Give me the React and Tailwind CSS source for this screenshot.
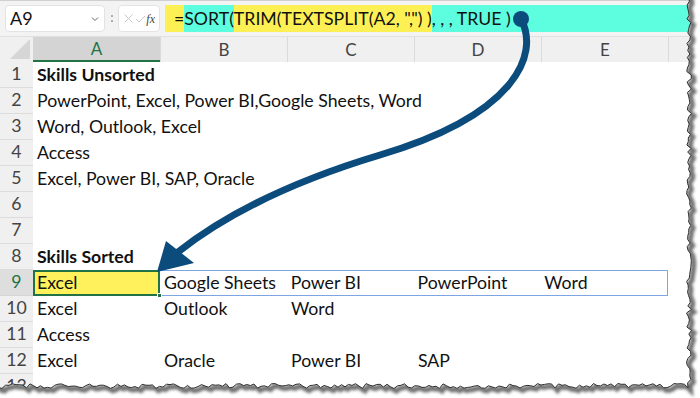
import React from 'react';

const cols = ['A', 'B', 'C', 'D', 'E'];

const rows = [
  { n: 1, cells: ['Skills Unsorted'], bold: true },
  { n: 2, cells: ['PowerPoint, Excel, Power BI,Google Sheets, Word'] },
  { n: 3, cells: ['Word, Outlook, Excel'] },
  { n: 4, cells: ['Access'] },
  { n: 5, cells: ['Excel, Power BI, SAP, Oracle'] },
  { n: 6, cells: [] },
  { n: 7, cells: [] },
  { n: 8, cells: ['Skills Sorted'], bold: true },
  { n: 9, cells: ['Excel', 'Google Sheets', 'Power BI', 'PowerPoint', 'Word'], active: true },
  { n: 10, cells: ['Excel', 'Outlook', 'Word'] },
  { n: 11, cells: ['Access'] },
  { n: 12, cells: ['Excel', 'Oracle', 'Power BI', 'SAP'] },
  { n: 13, cells: [] },
];

// jagged torn edge, seeded so it renders the same each time
function tornPath() {
  let s = 7;
  const rnd = () => {
    s = (s * 9301 + 49297) % 233280;
    return s / 233280;
  };
  const pts = [];
  for (let y = -2; y <= 386; y += 3.5) pts.push([689 + (rnd() - 0.5) * 5, y]);
  for (let x = 688; x >= -2; x -= 3.5) pts.push([x, 386 + (rnd() - 0.5) * 5]);
  return 'M' + pts.map(p => p[0].toFixed(1) + ' ' + p[1].toFixed(1)).join(' L') + ' L-2 -2 Z';
}

function TornEdge() {
  const edge = tornPath();
  const outside = 'M-10 -10 H710 V410 H-10 Z ' + edge;
  return (
    <svg className="absolute inset-0 pointer-events-none" width="700" height="398" viewBox="0 0 700 398">
      <defs>
        <clipPath id="out">
          <path d={outside} clipRule="evenodd" />
        </clipPath>
        <filter id="blur" x="-10%" y="-10%" width="120%" height="120%">
          <feGaussianBlur stdDeviation="1.6" />
        </filter>
      </defs>
      <path d={outside} fill="#fff" fillRule="evenodd" />
      <g clipPath="url(#out)">
        <path d={edge} fill="none" stroke="#707070" strokeWidth="5" filter="url(#blur)" transform="translate(2.5 2.5)" />
      </g>
      <path d={edge} fill="none" stroke="#2e2e2e" strokeWidth="1" />
    </svg>
  );
}

function Arrow() {
  return (
    <svg className="absolute inset-0 pointer-events-none" width="700" height="398" viewBox="0 0 700 398">
      <path
        d="M521 19 C 540 55, 515 115, 380 155 C 290 182, 225 215, 178 252"
        fill="none"
        stroke="#0c4c7d"
        strokeWidth="7"
        strokeLinecap="round"
      />
      <circle cx="521" cy="19" r="8" fill="#0c4c7d" />
      <polygon points="157,272 166,241 194,263" fill="#0c4c7d" />
    </svg>
  );
}

export default function App() {
  return (
    <div
      className="relative w-[700px] h-[398px] overflow-hidden bg-white text-[#111]"
      style={{ fontFamily: 'Lato, "Open Sans", sans-serif' }}
    >
      {/* formula bar */}
      <div className="h-[36px] bg-[#f3f3f3] flex items-center pl-[5px] border-t border-[#cfcfcf]">
        <div className="w-[100px] h-[27px] bg-white rounded-[4px] border border-[#e3e3e3] flex items-center justify-between pl-[4px] pr-[4px]">
          <span className="text-[18px]">A9</span>
          <svg width="10" height="10" viewBox="0 0 10 10">
            <path d="M2 3.5 L5 6.5 L8 3.5" fill="none" stroke="#666" strokeWidth="1" />
          </svg>
        </div>
        <div className="w-[13px] flex flex-col items-center gap-[3px]">
          <span className="w-[2px] h-[2px] bg-[#999] rounded-full"></span>
          <span className="w-[2px] h-[2px] bg-[#999] rounded-full"></span>
        </div>
        <div className="w-[42px] h-[27px] bg-white rounded-[4px] border border-[#e3e3e3] flex items-center justify-between px-[4px]">
          <svg width="11" height="11" viewBox="0 0 11 11">
            <path d="M1.5 1.5 L9.5 9.5 M9.5 1.5 L1.5 9.5" stroke="#c8c8c8" strokeWidth="1" />
          </svg>
          <svg width="11" height="10" viewBox="0 0 11 10">
            <path d="M1 5 L4 8 L10 2" fill="none" stroke="#c8c8c8" strokeWidth="1" />
          </svg>
          <span className="text-[12px] italic text-[#444]" style={{ fontFamily: '"Liberation Serif", serif' }}>fx</span>
        </div>
        <div className="ml-[5px] flex-1 h-[27px] flex items-stretch text-[17.7px] leading-[27px] whitespace-nowrap">
          <span className="bg-[#fdf054] pl-[9px]">=</span>
          <span className="bg-[#5dfde0]">SORT(</span>
          <span className="bg-[#fdf054]">TRIM(TEXTSPLIT(A2, ",") )</span>
          <span className="bg-[#5dfde0] flex-1">, , , TRUE )</span>
        </div>
      </div>

      {/* column headers */}
      <div className="h-[26px] flex bg-[#f0f0f0] border-t border-[#e0e0e0]">
        <div className="w-[33px] relative">
          <svg className="absolute right-[3px] bottom-[3px]" width="20" height="20" viewBox="0 0 20 20">
            <polygon points="20,0 20,20 0,20" fill="#d6d6d6" />
          </svg>
        </div>
        {cols.map(c => (
          <div
            key={c}
            className={
              c === 'A'
                ? 'w-[127px] flex items-center justify-center bg-[#d4d4d4] text-[#217346] border-b-2 border-[#217346] text-[17px]'
                : 'w-[127px] flex items-center justify-center text-[#444] border-l border-[#dadada] text-[17px]'
            }
          >
            {c}
          </div>
        ))}
        <div className="flex-1 border-l border-[#dadada]"></div>
      </div>

      {/* grid */}
      {rows.map(r => (
        <div key={r.n} className="h-[26px] flex">
          <div
            className={
              r.active
                ? 'w-[33px] bg-[#dedede] text-[#217346] border-b border-[#d6d6d6] flex items-center justify-center text-[17.7px]'
                : 'w-[33px] bg-[#f0f0f0] text-[#444] border-b border-[#dcdcdc] flex items-center justify-center text-[17.7px]'
            }
          >
            {r.n}
          </div>
          {r.active ? (
            <div className="flex flex-1">
              <div className="w-[127px] relative bg-[#fef15b] border-2 border-[#217346] pl-[2px] text-[17.7px] leading-[22px] flex items-center">
                Excel
                <span className="absolute right-[-4px] bottom-[-4px] w-[5px] h-[5px] bg-[#217346] border border-white"></span>
              </div>
              <div className="w-[508px] flex border border-[#7ea4e2] border-l-0">
                {r.cells.slice(1).map((t, i) => (
                  <div key={i} className="w-[127px] pl-[4px] text-[17.7px] flex items-center whitespace-nowrap">
                    {t}
                  </div>
                ))}
              </div>
            </div>
          ) : (
            <div className="flex flex-1">
              {r.cells.map((t, i) => (
                <div
                  key={i}
                  className={
                    (r.bold ? 'font-bold ' : '') +
                    'w-[127px] pl-[4px] text-[17.7px] flex items-center whitespace-nowrap'
                  }
                >
                  {t}
                </div>
              ))}
            </div>
          )}
        </div>
      ))}

      <Arrow />
      <TornEdge />
    </div>
  );
}
